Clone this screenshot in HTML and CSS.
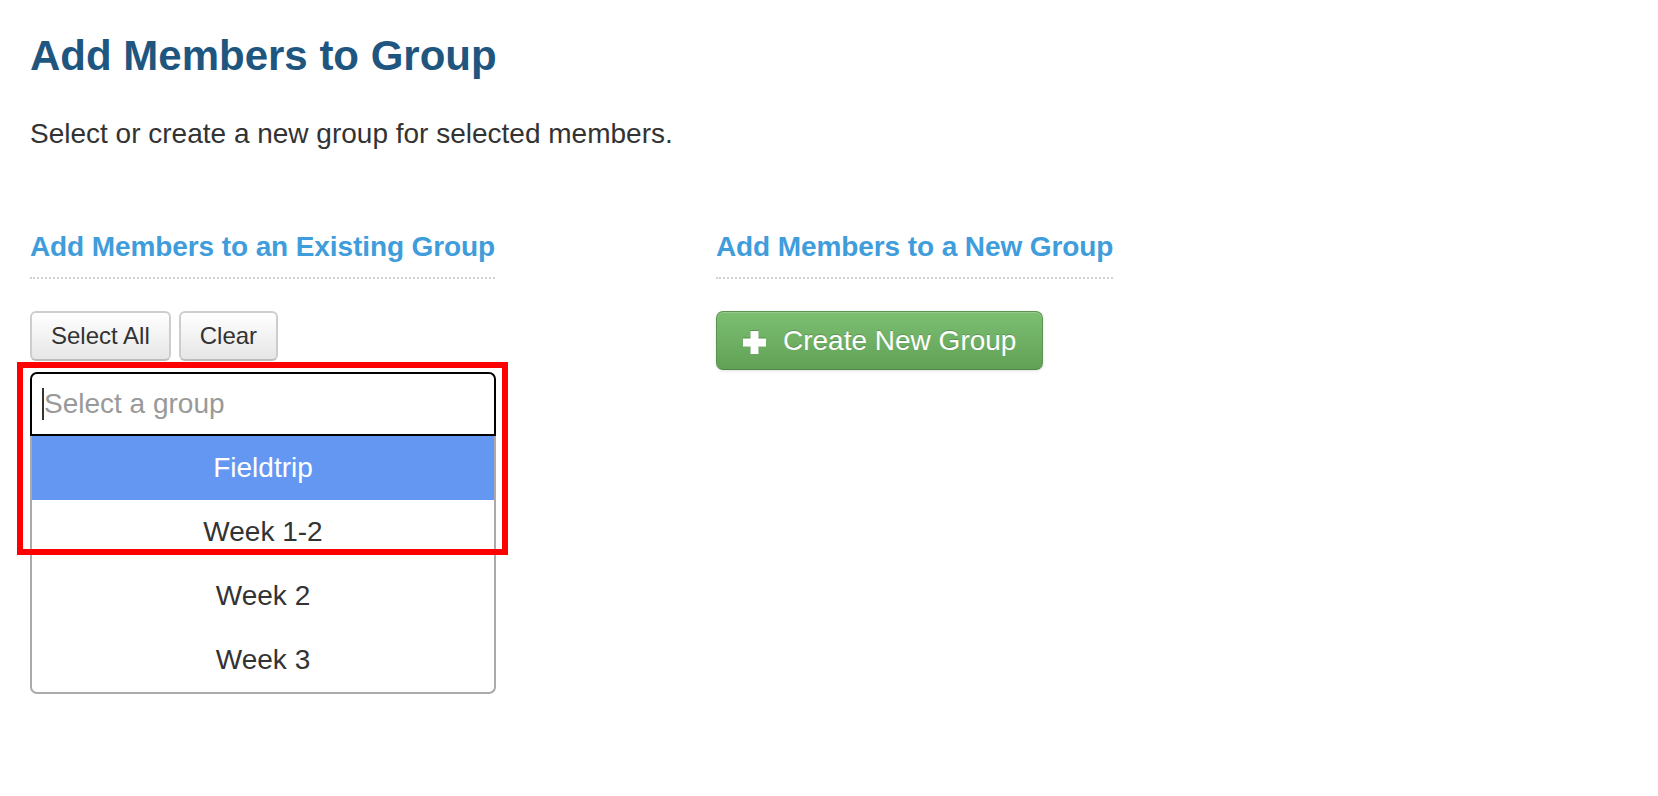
FILE: index.html
```html
<!DOCTYPE html>
<html lang="en">
<head>
<meta charset="utf-8">
<title>Add Members to Group</title>
<link rel="stylesheet" href="styles.css">
</head>
<body>
<div class="page">
  <h1 class="title">Add Members to Group</h1>
  <p class="lead">Select or create a new group for selected members.</p>
  <div class="columns">
    <section class="col">
      <h3 class="section-title">Add Members to an Existing Group</h3>
      <div class="btn-row">
        <button class="btn" type="button">Select All</button>
        <button class="btn" type="button">Clear</button>
      </div>
      <div class="chooser">
        <div class="chooser-input"><span class="caret"></span><span class="placeholder">Select a group</span></div>
        <ul class="chooser-list">
          <li class="option active">Fieldtrip</li>
          <li class="option">Week 1-2</li>
          <li class="option">Week 2</li>
          <li class="option">Week 3</li>
        </ul>
        <div class="highlight-box"></div>
      </div>
    </section>
    <section class="col">
      <h3 class="section-title">Add Members to a New Group</h3>
      <button class="btn-create" type="button"><svg class="plus" width="23" height="23" viewBox="0 0 23 23" aria-hidden="true"><rect x="7.5" y="0" width="8" height="23" fill="#fff"/><rect x="0" y="7.5" width="23" height="8" fill="#fff"/></svg><span>Create New Group</span></button>
    </section>
  </div>
</div>
</body>
</html>
```
FILE: styles.css
```css
* { box-sizing: border-box; }

body {
  margin: 0;
  background: #fff;
  font-family: "Liberation Sans", Arial, Helvetica, sans-serif;
  color: #333;
}

.page {
  padding: 33px 30px 0;
}

.title {
  margin: 0;
  font-size: 42px;
  line-height: 46px;
  font-weight: bold;
  color: #1f567f;
}

.lead {
  margin: 35px 0 0;
  font-size: 28px;
  line-height: 40px;
  color: #333;
}

.columns {
  display: grid;
  grid-template-columns: 686px 1fr;
  margin-top: 76px;
}

.section-title {
  width: fit-content;
  margin: 0;
  padding-bottom: 13px;
  font-size: 28px;
  line-height: 34px;
  font-weight: bold;
  letter-spacing: -0.1px;
  color: #409ddb;
  border-bottom: 2px dotted #d2d2d2;
}

.btn-row {
  display: flex;
  gap: 8px;
  margin-top: 32px;
}

.btn {
  height: 50px;
  padding: 0 19px;
  border: 2px solid #cdcdcd;
  border-bottom-color: #bdbdbd;
  border-radius: 6px;
  background: linear-gradient(#ffffff, #e6e6e6);
  font-family: "Liberation Sans", Arial, Helvetica, sans-serif;
  font-size: 24px;
  line-height: 46px;
  color: #333;
}

.chooser {
  position: relative;
  width: 466px;
  margin-top: 11px;
}

.chooser-input {
  display: flex;
  align-items: center;
  height: 64px;
  padding-left: 10px;
  border: 2px solid #000;
  border-radius: 7px 7px 0 0;
  font-size: 28px;
  line-height: 32px;
}

.caret {
  width: 2px;
  height: 32px;
  background: #333;
}

.placeholder {
  color: #999;
}

.chooser-list {
  list-style: none;
  margin: 0;
  padding: 0;
  border: 2px solid #aaa;
  border-top: 0;
  border-radius: 0 0 7px 7px;
  overflow: hidden;
}

.option {
  height: 64px;
  line-height: 64px;
  text-align: center;
  font-size: 28px;
  color: #333;
}

.option.active {
  background: #6497f1;
  color: #fff;
}

.highlight-box {
  position: absolute;
  left: -13px;
  top: -10px;
  width: 491px;
  height: 193px;
  border: 6px solid #ff0000;
  pointer-events: none;
}

.btn-create {
  display: flex;
  align-items: center;
  width: fit-content;
  height: 59px;
  margin-top: 32px;
  padding: 0 26px;
  border: 1px solid #5a9550;
  border-bottom-color: #4f8746;
  border-radius: 7px;
  background: linear-gradient(#7dbf71, #61a157);
  box-shadow: inset 0 1px 0 rgba(255,255,255,0.2), 0 1px 3px rgba(0,0,0,0.12);
  font-family: "Liberation Sans", Arial, Helvetica, sans-serif;
  font-size: 28px;
  line-height: 32px;
  color: #fff;
  text-shadow: 0 -1px 0 rgba(0,0,0,0.2);
}

.plus {
  margin-top: 3px;
  margin-right: 17px;
  filter: drop-shadow(0 -1px 0 rgba(0,0,0,0.2));
}
```
